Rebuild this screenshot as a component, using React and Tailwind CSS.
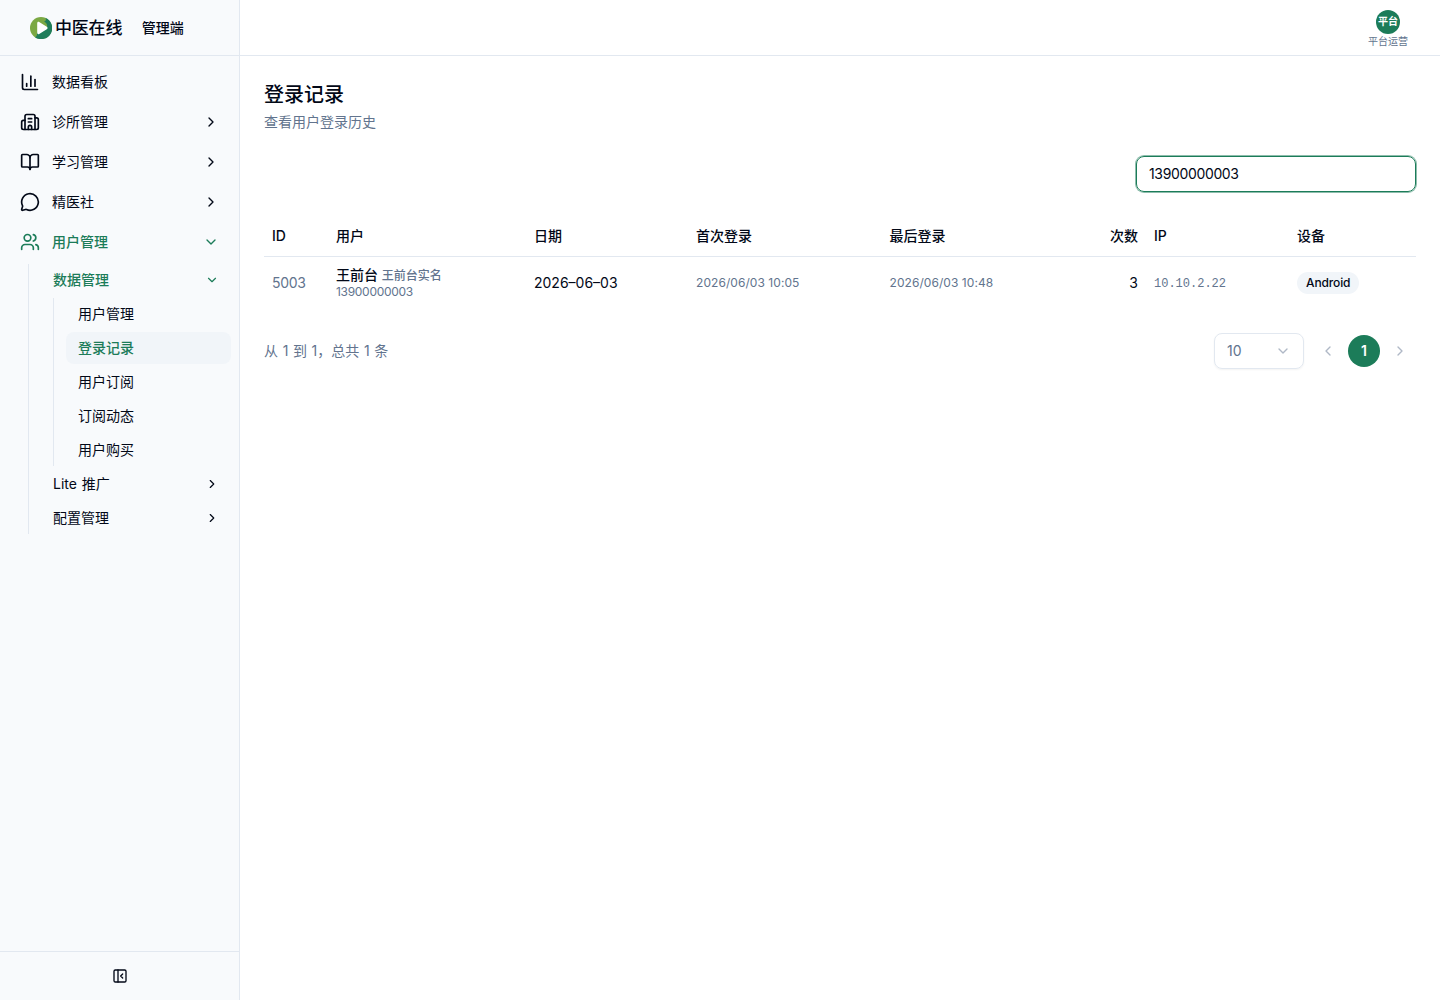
import {
  BookOpen,
  Building2,
  ChartColumn,
  ChevronDown,
  ChevronLeft,
  ChevronRight,
  MessageCircle,
  PanelLeftClose,
  Users,
} from 'lucide-react';
import clsx from 'clsx';

const NAV = [
  { label: '数据看板', icon: ChartColumn, leaf: true },
  { label: '诊所管理', icon: Building2 },
  { label: '学习管理', icon: BookOpen },
  { label: '精医社', icon: MessageCircle },
  { label: '用户管理', icon: Users, open: true },
];

const PAGES = ['用户管理', '登录记录', '用户订阅', '订阅动态', '用户购买'];

const ROWS = [
  {
    id: 5003, name: '王前台', realName: '王前台实名', phone: '13900000003', date: '2026–06–03',
    first: '2026/06/03 10:05', last: '2026/06/03 10:48', count: 3, ip: '10.10.2.22', device: 'Android',
  },
];

function Logo() {
  return (
    <div className="flex items-center">
      <svg width="22" height="22" viewBox="0 0 22 22" className="shrink-0">
        <circle cx="11" cy="11" r="11" fill="#7ba843" />
        <path d="M15.500 1A11 11 0 1 1 5 20.200C7 19.500 7.200 17.500 7.200 15L17 11C17.500 8 17 6 14 4.500C16 4 16.300 2.500 15.500 1Z" fill="#1f7d5a" />
        <path d="M7.200 6.200c0-1.200 1-1.800 2-1.200l7.600 4.700c1 .6 1 2 0 2.600l-7.600 4.700c-1 .6-2 0-2-1.200z" fill="#fff" />
      </svg>
      <span className="ml-[3px] text-[17px] leading-6 font-medium tracking-[-0.2px]">中医在线</span>
    </div>
  );
}

function NavItem({ label, icon: Icon, open, leaf }) {
  const Chevron = open ? ChevronDown : ChevronRight;
  return (
    <button className={clsx('flex h-9 w-full items-center gap-3 rounded-lg px-3 text-sm', open && 'font-medium text-[#1c7c59]')}>
      <Icon className="size-5" />
      <span className="flex-1 text-left">{label}</span>
      {!leaf && <Chevron className="size-4" />}
    </button>
  );
}

function SubItem({ label, open }) {
  const Chevron = open ? ChevronDown : ChevronRight;
  return (
    <button className={clsx('flex h-8 w-full items-center justify-between rounded-lg px-3 text-sm', open && 'font-medium text-[#1c7c59]')}>
      <span className="[word-spacing:1px]">{label}</span>
      <Chevron className="size-3.5" />
    </button>
  );
}

function Sidebar() {
  return (
    <aside className="flex w-60 shrink-0 flex-col border-r border-slate-200 bg-slate-50">
      <div className="flex h-14 shrink-0 items-center border-b border-slate-200 pl-[30px]">
        <Logo />
        <span className="ml-[19.5px] text-sm font-medium">管理端</span>
      </div>
      <nav className="flex-1 p-2">
        <div className="space-y-1">
          {NAV.map(item => <NavItem key={item.label} {...item} />)}
        </div>
        <div className="mt-1 ml-5 space-y-0.5 border-l border-slate-200 pl-3">
          <SubItem label="数据管理" open />
          <div className="ml-3 space-y-0.5 border-l border-slate-200 pl-3">
            {PAGES.map(page => (
              <button
                key={page}
                className={clsx('flex h-8 w-full items-center rounded-lg px-3 text-sm', page === '登录记录' && 'bg-slate-100 font-medium text-[#1c7c59]')}>
                {page}
              </button>
            ))}
          </div>
          <SubItem label="Lite 推广" />
          <SubItem label="配置管理" />
        </div>
      </nav>
      <div className="flex h-[49px] items-center justify-center border-t border-slate-200">
        <PanelLeftClose className="size-4" />
      </div>
    </aside>
  );
}

function LoginTable() {
  return (
    <table className="mt-6 w-full table-fixed text-sm">
      <colgroup>
        <col className="w-[64px]" />
        <col className="w-[198px]" />
        <col className="w-[162px]" />
        <col className="w-[193.5px]" />
        <col className="w-[193.5px]" />
        <col className="w-[71px]" />
        <col className="w-[143px]" />
        <col />
      </colgroup>
      <thead>
        <tr className="h-10 border-b border-slate-200 text-left [&>th]:px-2 [&>th]:font-medium">
          <th>ID</th>
          <th>用户</th>
          <th>日期</th>
          <th>首次登录</th>
          <th>最后登录</th>
          <th className="text-right">次数</th>
          <th>IP</th>
          <th>设备</th>
        </tr>
      </thead>
      <tbody>
        {ROWS.map(row => (
          <tr key={row.id} className="h-[53px] [&>td]:px-2">
            <td className="tracking-[-0.02em] text-slate-500">{row.id}</td>
            <td>
              <div className="pt-px leading-[18px] font-medium">
                {row.name} <span className="text-xs text-slate-500">{row.realName}</span>
              </div>
              <div className="text-xs leading-4 tracking-[-0.025em] text-slate-500">{row.phone}</div>
            </td>
            <td>{row.date}</td>
            <td className="text-xs tracking-[0.005em] text-slate-500">{row.first}</td>
            <td className="text-xs tracking-[0.005em] text-slate-500">{row.last}</td>
            <td className="text-right">{row.count}</td>
            <td className="font-['Liberation_Mono',monospace] text-xs text-slate-500">
              <div className="pt-0.5">{row.ip}</div>
            </td>
            <td>
              <span className="inline-flex h-[22px] items-center rounded-full bg-slate-100 px-[9px] text-xs font-medium tracking-[-0.01em]">{row.device}</span>
            </td>
          </tr>
        ))}
      </tbody>
    </table>
  );
}

function Pagination() {
  return (
    <div className="mt-6 flex h-9 items-center justify-between text-sm text-slate-500">
      <span className="[word-spacing:0.7px]">从 1 到 1，总共 1 条</span>
      <div className="flex items-center">
        <button className="mr-2 flex h-9 w-[90px] items-center justify-between rounded-lg border border-slate-200 px-3 shadow-xs">
          10
          <ChevronDown className="size-4 opacity-50" />
        </button>
        <button className="flex size-8 items-center justify-center opacity-50"><ChevronLeft className="size-4" /></button>
        <button className="mx-1 flex size-8 items-center justify-center rounded-full bg-[#1c7c59] font-semibold text-white">1</button>
        <button className="flex size-8 items-center justify-center opacity-50"><ChevronRight className="size-4" /></button>
      </div>
    </div>
  );
}

export default function App() {
  return (
    <div className="flex h-screen bg-white font-['Inter','Noto_Sans_CJK_SC',sans-serif] text-[#020817]">
      <Sidebar />
      <div className="flex min-w-0 flex-1 flex-col">
        <header className="flex h-14 shrink-0 justify-end border-b border-slate-200 pt-[10px] pr-8">
          <div className="flex flex-col items-center">
            <div className="flex size-6 items-center justify-center rounded-full bg-[#1c7c59] pb-px text-[10px] font-semibold text-white">平台</div>
            <span className="mt-px text-[10px] leading-3 text-slate-500">平台运营</span>
          </div>
        </header>
        <main className="flex-1 p-6">
          <h1 className="pt-px text-xl leading-7 font-medium">登录记录</h1>
          <p className="text-sm leading-[26px] text-slate-500">查看用户登录历史</p>
          <div className="mt-[21px] flex justify-end">
            <input
              className="h-9 w-[280px] rounded-lg border border-[#1c7c59] px-3 pb-px text-sm tracking-[-0.025em] ring-1 ring-[#1c7c59]/50 outline-none"
              defaultValue="13900000003"
            />
          </div>
          <LoginTable />
          <Pagination />
        </main>
      </div>
    </div>
  );
}
